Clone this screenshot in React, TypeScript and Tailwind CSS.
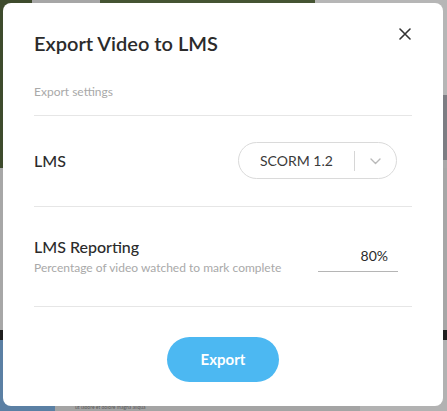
import { useState } from 'react';

function ChevronDown() {
  return (
    <svg width="11" height="7" viewBox="0 0 11 7" fill="none" stroke="#b9b9b9" strokeWidth="1.4" strokeLinecap="round" strokeLinejoin="round">
      <path d="M1 1l4.5 4.5L10 1" />
    </svg>
  );
}

function CloseIcon() {
  return (
    <svg width="12" height="12" viewBox="0 0 12 12" fill="none" stroke="#333" strokeWidth="1.6" strokeLinecap="round">
      <path d="M1 1l10 10M11 1L1 11" />
    </svg>
  );
}

export default function App() {
  const [lms] = useState('SCORM 1.2');
  const [percent, setPercent] = useState('80%');

  return (
    <div className="relative w-[447px] h-[411px] overflow-hidden font-['Lato','Liberation_Sans',sans-serif]">
      {/* Blurred page behind the dialog */}
      <div className="flex flex-col h-full">
        <div className="flex h-[168px]">
          <div className="w-[32px] bg-[#3e4b2d]" />
          <div className="w-[68px] bg-[#a6a6a6]" />
          <div className="w-[215px] bg-[#455433]" />
          <div className="flex-1 flex flex-col">
            <div className="h-[95px] bg-[#b6b6b6]" />
            <div className="h-[65px] bg-[#7d7d83]" />
            <div className="flex-1 bg-[#a9a9a9]" />
          </div>
        </div>
        <div className="h-[162px] bg-[#a7a7a7]" />
        <div className="h-[10px] bg-[#1f1f1f]" />
        <div className="flex-1 flex">
          <div className="w-[55px] bg-[#5b80a4]" />
          <div className="flex-1 bg-[#a4a4a4] pt-[58px] pl-[20px] text-[5px] text-[#5a5a5a] leading-[6px]">
            <p>Lorem ipsum dolor sit amet, consectetur adipiscing elit, sed do eiusmod tempor incididunt</p>
            <p>ut labore et dolore magna aliqua</p>
          </div>
          <div className="w-[87px] bg-[#b2b2b2]" />
        </div>
      </div>

      {/* Dialog */}
      <div className="absolute left-[3px] top-[3px] w-[440px] h-[403px] rounded-[8px] bg-white px-[31px] pt-[28px] flex flex-col">
        <button className="absolute right-[32px] top-[25px] p-0">
          <CloseIcon />
        </button>

        <h2 className="text-[20px] leading-[24px] font-semibold text-[#2b2b2b]">Export Video to LMS</h2>
        <p className="mt-[29px] text-[12px] leading-[16px] text-[#a9a9a9]">Export settings</p>

        <div className="mt-[15px] border-t border-[#e6e6e6] flex items-center justify-between pr-[15px] pt-[26px] pb-[27px]">
          <span className="text-[16px] leading-[20px] font-medium text-[#2b2b2b]">LMS</span>
          <div className="w-[159px] h-[37px] rounded-full border border-[#dadada] flex items-center pl-[21px]">
            <span className="w-[94px] text-[14px] text-[#3a3a3a]">{lms}</span>
            <span className="w-px h-[20px] bg-[#d6d6d6]" />
            <span className="flex-1 flex justify-center pt-[1px]">
              <ChevronDown />
            </span>
          </div>
        </div>

        <div className="border-t border-[#e6e6e6] flex items-end justify-between pr-[14px] pt-[30px] pb-[30px]">
          <div>
            <div className="text-[16px] leading-[20px] font-medium text-[#2b2b2b]">LMS Reporting</div>
            <div className="mt-[3px] text-[12px] leading-[16px] text-[#a9a9a9]">
              Percentage of video watched to mark complete
            </div>
          </div>
          <input
            value={percent}
            onChange={(e) => setPercent(e.target.value)}
            className="w-[80px] mb-[4px] border-b border-[#b5b5b5] pr-[10px] pb-[5px] text-right text-[14px] text-[#2b2b2b] outline-none"
          />
        </div>

        <div className="border-t border-[#e6e6e6] flex justify-center pt-[30px]">
          <button className="w-[112px] h-[45px] rounded-full bg-[#4cb8f2] text-white text-[15px] font-bold">
            Export
          </button>
        </div>
      </div>
    </div>
  );
}
